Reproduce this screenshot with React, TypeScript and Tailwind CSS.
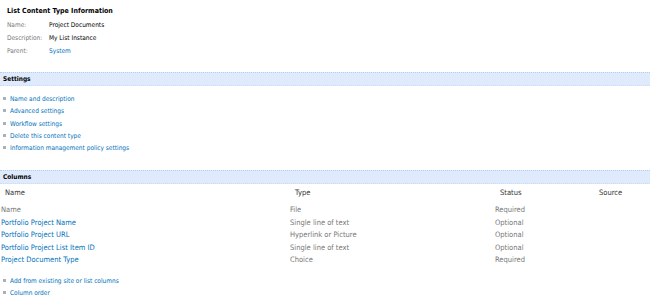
export default function App() {
  const settings = [
    "Name and description",
    "Advanced settings",
    "Workflow settings",
    "Delete this content type",
    "Information management policy settings",
  ];
  const columns = [
    { name: "Name", type: "File", status: "Required", link: false },
    { name: "Portfolio Project Name", type: "Single line of text", status: "Optional", link: true },
    { name: "Portfolio Project URL", type: "Hyperlink or Picture", status: "Optional", link: true },
    { name: "Portfolio Project List Item ID", type: "Single line of text", status: "Optional", link: true },
    { name: "Project Document Type", type: "Choice", status: "Required", link: true },
  ];

  const Bullet = () => (
    <span className="inline-block w-[3px] h-[3px] bg-[#a8b0ba] mr-[4px] mb-[1px] align-middle" />
  );

  return (
    <div
      className="w-[650px] h-[307px] bg-white overflow-hidden text-[6.5px] leading-[12px] text-[#333]"
      style={{ fontFamily: '"DejaVu Sans Condensed", "DejaVu Sans", sans-serif' }}
    >
      {/* Info block */}
      <div className="pl-[7px] pt-[5px]">
        <div className="font-bold text-[7px] text-black h-[14px]">List Content Type Information</div>
        <div className="flex h-[13px]">
          <span className="w-[42px] text-[#777]">Name:</span>
          <span className="text-black">Project Documents</span>
        </div>
        <div className="flex h-[13px]">
          <span className="w-[42px] text-[#777]">Description:</span>
          <span className="text-black">My List Instance</span>
        </div>
        <div className="flex h-[13px]">
          <span className="w-[42px] text-[#777]">Parent:</span>
          <span className="text-[#0072bc]">System</span>
        </div>
      </div>

      {/* Settings */}
      <div className="mt-[14px] h-[14px] bg-[#dfeafc] border-t border-[#b3cff0] border-b border-dotted border-b-[#cadcf4] pl-[3px] font-bold text-black leading-[12px]">
        Settings
      </div>
      <div className="pl-[3px] pt-[7px]">
        {settings.map((s) => (
          <div key={s} className="h-[12.25px] text-[#0072bc]">
            <Bullet />
            {s}
          </div>
        ))}
      </div>

      {/* Columns */}
      <div className="mt-[16px] h-[14px] bg-[#dfeafc] border-t border-[#b3cff0] border-b border-dotted border-b-[#cadcf4] pl-[3px] font-bold text-black leading-[12px]">
        Columns
      </div>
      <div className="flex h-[15px] pt-[3px] text-[7.5px] text-[#333]">
        <span className="w-[290px] pl-[5px]">Name</span>
        <span className="w-[205px] pl-[5px]">Type</span>
        <span className="w-[104px] pl-[5px]">Status</span>
        <span>Source</span>
      </div>
      <div className="pt-[5px] text-[7.5px]">
        {columns.map((c) => (
          <div key={c.name} className="flex h-[12.5px]">
            <span className={`w-[290px] pl-[1px] ${c.link ? "text-[#0072bc]" : "text-[#777]"}`}>{c.name}</span>
            <span className="w-[205px] text-[#777]">{c.type}</span>
            <span className="text-[#777]">{c.status}</span>
          </div>
        ))}
      </div>
      <div className="pl-[3px] pt-[8px]">
        <div className="h-[12px] text-[#0072bc]">
          <Bullet />
          Add from existing site or list columns
        </div>
        <div className="h-[12px] text-[#0072bc]">
          <Bullet />
          Column order
        </div>
      </div>
    </div>
  );
}
